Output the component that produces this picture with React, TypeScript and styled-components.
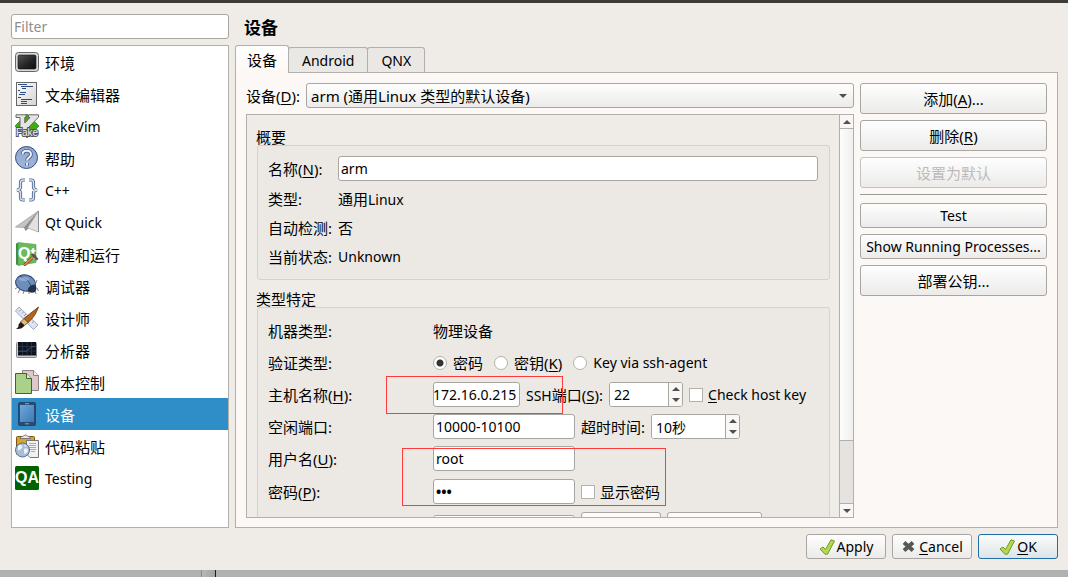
import React, { useState } from 'react';
import styled, { createGlobalStyle, css } from 'styled-components';

const GlobalStyle = createGlobalStyle`
  *, *::before, *::after { box-sizing: border-box; }
  body { margin: 0; background: #efebe7; }
  body, input, button, select {
    font-family: "Noto Sans", "Noto Sans CJK SC", sans-serif;
    font-size: 15px;
    color: #000;
  }
`;

/* ---------- shell ---------- */

const Dialog = styled.div`
  height: 100vh;
  display: flex;
  flex-direction: column;
  background: #efebe7;
  border-top: 3px solid #3c3b37;
`;

const Body = styled.div`
  flex: 1;
  min-height: 0;
  display: flex;
  gap: 6px;
  padding: 11px 10px 0 11px;
`;

const Sidebar = styled.aside`
  flex: none;
  width: 218px;
  display: flex;
  flex-direction: column;
  gap: 6px;
`;

const Main = styled.main`
  flex: 1;
  min-width: 0;
  display: flex;
  flex-direction: column;
`;

const Footer = styled.footer`
  display: flex;
  justify-content: flex-end;
  gap: 6px;
  padding: 6px 10px 11px;
`;

const Desktop = styled.div`
  flex: none;
  display: flex;
  height: 7px;
  background: #b1b1b1;
`;

const DesktopSeam = styled.div`
  width: 15px;
  margin-left: 201px;
  border-left: 1px solid #8a8a8a;
  border-right: 1px solid #1a1a1a;
  background: linear-gradient(90deg, #b8b8b6, #a3a3a1);
`;

/* ---------- text ---------- */

const Latin = styled.span`
  font-size: 14px;
`;

const Mnemonic = styled.u`
  text-underline-offset: 2px;
  text-decoration-thickness: 1px;
`;

const Hot = ({ k }: { k: string }) => (
  <span>
    (<Mnemonic>{k}</Mnemonic>)
  </span>
);

/* ---------- controls ---------- */

const field = css`
  height: 25px;
  border: 1px solid #a9a6a2;
  border-radius: 3px;
  background: #fff;
  outline: none;
`;

const TextField = styled.input<{ $w?: number; $flush?: boolean }>`
  ${field}
  min-width: 0;
  width: ${p => (p.$w ? `${p.$w}px` : '100%')};
  padding: ${p => (p.$flush ? '0 3px 0 0' : '0 3px 0 2px')};
  font-size: 14px;
  &[type='password'] { font-weight: 700; }
  &::placeholder { color: #8e8e8e; opacity: 1; }
`;

const Button = styled.button<{ $tall?: boolean; $primary?: boolean; $w?: number }>`
  display: flex;
  align-items: center;
  justify-content: center;
  flex: none;
  width: ${p => (p.$w ? `${p.$w}px` : '100%')};
  height: ${p => (p.$tall ? 31 : 25)}px;
  padding: 0;
  white-space: nowrap;
  font-size: ${p => (p.$tall ? 15 : 14)}px;
  border: 1px solid ${p => (p.$primary ? '#1f6ea7' : '#a9a6a2')};
  border-radius: 3px;
  background: ${p =>
    p.$primary
      ? 'linear-gradient(#fbfcfc, #dde4e8)'
      : 'linear-gradient(#fefefe, #ecebea)'};
  &:disabled { color: #bdbbb9; border-color: #c4c1be; }
`;

const SelectWrap = styled.div`
  position: relative;
  flex: 1;
  min-width: 0;
  display: flex;
`;

const Select = styled.select`
  appearance: none;
  width: 100%;
  height: 25px;
  padding: 0 24px 0 4px;
  border: 1px solid #a9a6a2;
  border-radius: 3px;
  background: linear-gradient(#fefefe, #ecebea);
  font-size: 15px;
  outline: none;
`;

const SelectArrow = styled.svg`
  position: absolute;
  right: 7px;
  top: 11px;
  pointer-events: none;
`;

const Arrow = ({ up }: { up?: boolean }) => (
  <svg width="8" height="4" viewBox="0 0 8 4">
    <path d={up ? 'M0 4L4 0L8 4Z' : 'M0 0L4 4L8 0Z'} fill="#50504e" />
  </svg>
);

const SpinFrame = styled.div<{ $w: number }>`
  ${field}
  display: flex;
  overflow: hidden;
  width: ${p => p.$w}px;
`;

const SpinInput = styled.input`
  flex: 1;
  min-width: 0;
  padding: 0 0 0 4px;
  border: 0;
  outline: none;
  font-size: 14px;
`;

const SpinButtons = styled.div`
  display: flex;
  flex-direction: column;
  width: 14px;
  border-left: 1px solid #a9a6a2;
`;

const SpinButton = styled.button`
  flex: 1;
  display: flex;
  align-items: center;
  justify-content: center;
  padding: 0;
  border: 0;
  background: #f8f7f6;
`;

const Spin = ({ id, value, w }: { id: string; value: string; w: number }) => (
  <SpinFrame $w={w}>
    <SpinInput id={id} defaultValue={value} />
    <SpinButtons>
      <SpinButton aria-label="+"><Arrow up /></SpinButton>
      <SpinButton aria-label="-"><Arrow /></SpinButton>
    </SpinButtons>
  </SpinFrame>
);

const Check = styled.input`
  appearance: none;
  flex: none;
  width: 14px;
  height: 14px;
  margin: 0 5px 0 0;
  border: 1px solid #b4b1ad;
  background: #fff;
`;

const Radio = styled(Check)`
  border-radius: 50%;
  margin-right: 6px;
  &:checked { background: radial-gradient(circle, #333 0 3px, #fff 4px); }
`;

const Choice = styled.label`
  display: flex;
  align-items: center;
  white-space: nowrap;
`;

/* ---------- category list ---------- */

const List = styled.ul`
  flex: 1;
  min-height: 0;
  overflow: hidden;
  margin: 0;
  padding: 0;
  list-style: none;
  border: 1px solid #b2afac;
  background: #fff;
`;

const Item = styled.li<{ $active?: boolean; $latin?: boolean }>`
  display: flex;
  align-items: center;
  gap: 6px;
  height: 32px;
  padding-left: 3px;
  font-size: ${p => (p.$latin ? 14 : 15)}px;
  color: ${p => (p.$active ? '#fff' : '#000')};
  background: ${p => (p.$active ? '#2f8dc7' : 'transparent')};
`;

/* ---------- tabs and panel ---------- */

const Title = styled.h1`
  margin: 0;
  padding: 2px 0 0 9px;
  height: 31px;
  font-size: 17px;
  line-height: 24px;
  font-weight: 700;
`;

const Tabs = styled.div`
  display: flex;
  align-items: flex-end;
  height: 27px;
`;

const Tab = styled.button<{ $active?: boolean }>`
  position: relative;
  height: ${p => (p.$active ? 28 : 25)}px;
  margin: 0 0 ${p => (p.$active ? -1 : 0)}px ${p => (p.$active ? 0 : -1)}px;
  padding: 0 ${p => (p.$active ? 11 : 13)}px;
  font-size: ${p => (p.$active ? 15 : 14)}px;
  border: 1px solid #b2afac;
  border-bottom: 0;
  border-radius: 3px 3px 0 0;
  background: ${p => (p.$active ? 'linear-gradient(#fff, #fcf8f5)' : '#eae8e4')};
`;

const Panel = styled.section`
  flex: 1;
  min-height: 0;
  display: flex;
  gap: 6px;
  padding: 10px 10px 9px;
  border: 1px solid #b2afac;
  background: #fcf8f5;
`;

const Left = styled.div`
  flex: 1;
  min-width: 0;
  display: flex;
  flex-direction: column;
  gap: 6px;
`;

const Actions = styled.div`
  flex: none;
  width: 187px;
  display: flex;
  flex-direction: column;
  gap: 6px;
`;

const Rule = styled.hr`
  width: 100%;
  margin: 0 0 2px;
  border: 0;
  border-top: 1px solid #9c9a98;
`;

const DeviceRow = styled.div`
  display: flex;
  align-items: center;
  gap: 6px;
`;

const ScrollFrame = styled.div`
  flex: 1;
  min-height: 0;
  display: flex;
  border: 1px solid #b2afac;
  background: #efebe7;
`;

const ScrollContent = styled.div`
  flex: 1;
  min-width: 0;
  overflow-y: auto;
  scrollbar-width: none;
  padding: 10px 9px 0 10px;
`;

const ScrollBar = styled.div`
  flex: none;
  width: 14px;
  display: flex;
  flex-direction: column;
  border-left: 1px solid #b2afac;
  background: #e4e3e0;
`;

const ScrollStep = styled.button`
  height: 13px;
  display: flex;
  align-items: center;
  justify-content: center;
  padding: 0;
  border: 0;
  background: #f8f7f6;
`;

const Thumb = styled.div`
  flex: 312;
  border: solid #b2afac;
  border-width: 1px 0;
  background: linear-gradient(90deg, #fdfdfd, #f0efee);
`;

const Track = styled.div`
  flex: 62;
  border-bottom: 1px solid #b2afac;
`;

const Group = styled.section`
  position: relative;
  & + & { margin-top: 7px; }
`;

const GroupTitle = styled.h2`
  margin: 0 0 0 -1px;
  height: 20px;
  font-size: 15px;
  line-height: 24px;
  font-weight: 400;
`;

const GroupBox = styled.div<{ $gap: number }>`
  display: flex;
  flex-direction: column;
  gap: ${p => p.$gap}px;
  padding: 10px 11px 11px 10px;
  border: 1px solid #d5d2ce;
  border-radius: 3px;
  background: #ece9e5;
`;

const Row = styled.div<{ $h?: number; $label: number }>`
  display: grid;
  grid-template-columns: ${p => p.$label}px minmax(0, 1fr);
  align-items: center;
  height: ${p => p.$h ?? 25}px;
`;

const Cell = styled.div<{ $gap?: number }>`
  display: flex;
  align-items: center;
  gap: ${p => p.$gap ?? 6}px;
  white-space: nowrap;
`;

const Marker = styled.div<{ $x: number; $y: number; $w: number; $h: number }>`
  position: absolute;
  left: ${p => p.$x}px;
  top: ${p => p.$y}px;
  width: ${p => p.$w}px;
  height: ${p => p.$h}px;
  border: 1px solid #ff3a3a;
  pointer-events: none;
`;

/* ---------- icons ---------- */

const Icon = ({ children }: { children: React.ReactNode }) => (
  <svg width="24" height="24" viewBox="0 0 24 24" aria-hidden="true">{children}</svg>
);

const MonitorIcon = () => (
  <Icon>
    <defs><linearGradient id="scr" x1="0" y1="0" x2="1" y2="1"><stop offset="0" stopColor="#555" /><stop offset=".6" stopColor="#222" /><stop offset="1" stopColor="#111" /></linearGradient></defs>
    <rect x=".5" y="2.5" width="23" height="19" rx="3" fill="#d9d9d9" stroke="#666" />
    <rect x="3" y="5" width="18" height="14" rx="1.5" fill="url(#scr)" stroke="#111" strokeWidth=".6" />
  </Icon>
);

const TextIcon = () => (
  <Icon>
    <defs><linearGradient id="pg" x1="0" y1="0" x2="1" y2="1"><stop offset="0" stopColor="#fff" /><stop offset="1" stopColor="#d3d3d3" /></linearGradient></defs>
    <rect x="1.5" y=".5" width="20" height="23" fill="url(#pg)" stroke="#666" />
    <path d="M3 2.5h9M6 4.5h12M7 6.5h4M3 8.5h2M5 10.5h6M4 12.5h4M7 12.5h3M3 15.500h3M6 17.500h11M6 19.500h6M6 21.500h6" stroke="#2d4b7c" />
  </Icon>
);

const VimIcon = () => (
  <Icon>
    <path d="M12 0L24 12L12 24L0 12Z" fill="#3fae14" stroke="#1d6b0c" strokeWidth=".6" />
    <path d="M1 .8H11V3.500H9.800V9L15 3.500H13.500V.8H23.500V3.200L10 17H5V3.500H1Z" fill="#e4e4e4" stroke="#666" />
    <text x="12" y="21.500" textAnchor="middle" fontFamily="Liberation Sans, sans-serif" fontSize="10" fill="#f2f2f2" stroke="#555" strokeWidth="2" paintOrder="stroke">Fake</text>
  </Icon>
);

const HelpIcon = () => (
  <Icon>
    <defs><linearGradient id="hp" x1="0" y1="0" x2="0" y2="1"><stop offset="0" stopColor="#8fa6cf" /><stop offset="1" stopColor="#9fb6dc" /></linearGradient></defs>
    <circle cx="11.500" cy="11.500" r="11" fill="url(#hp)" stroke="#35507f" />
    <path d="M7.500 8.500C7.500 3.500 16 3.500 16 8.500C16 11.500 12 11.500 12 14.500M12 17v2.500" fill="none" stroke="#3e5680" strokeWidth="3.600" />
    <path d="M7.500 8.500C7.500 3.500 16 3.500 16 8.500C16 11.500 12 11.500 12 14.500M12 17v2.500" fill="none" stroke="#eef2f9" strokeWidth="2" />
  </Icon>
);

const BraceIcon = () => {
  const d = 'M10 2H8Q5.500 2 5.500 4.500V9Q5.500 11.500 2 12Q5.500 12.500 5.500 15V19.500Q5.500 22 8 22H10M14 2H16Q18.500 2 18.500 4.500V9Q18.500 11.500 22 12Q18.500 12.500 18.500 15V19.500Q18.500 22 16 22H14';
  return (
    <Icon>
      <path d={d} fill="none" stroke="#52688a" strokeWidth="3.200" />
      <path d={d} fill="none" stroke="#d5dff0" strokeWidth="1.400" />
    </Icon>
  );
};

const PlaneIcon = () => (
  <Icon>
    <path d="M.5 17L23.500 1L10 17.500Z" fill="#c4c4c4" stroke="#9a9a9a" strokeWidth=".7" />
    <path d="M23.500 1L9 17.500L10.500 21L13.500 18.500Z" fill="#8c8c8c" />
    <path d="M23.500 1L12.500 18L23.500 22Z" fill="#e2e2e2" stroke="#a2a2a2" strokeWidth=".7" />
    <path d="M23.500 1V22" stroke="#8a8a8a" />
  </Icon>
);

const BuildIcon = () => (
  <Icon>
    <path d="M1 1.500L4 .5V23.500L1 22.500Z" fill="#3e8c45" />
    <path d="M3 .5L21 2.500V20.500L3 23.500Z" fill="#6cba5a" stroke="#4b9c48" strokeWidth=".6" />
    <text x="12" y="17" textAnchor="middle" fontFamily="Liberation Sans Narrow, Liberation Sans, sans-serif" fontWeight="700" fontSize="16" fill="#fff">Qt</text>
    <path d="M10 22.500L19 14" stroke="#7a4212" strokeWidth="3" strokeLinecap="round" />
    <path d="M10 22.500L19 14" stroke="#e09a4d" strokeWidth="1.600" strokeLinecap="round" />
    <path d="M15.500 12.500Q18 10.500 20 13L23.500 17L21.500 18.500L18 15Z" fill="#555" />
  </Icon>
);

const BugIcon = () => (
  <Icon>
    <path d="M3 13L0 15M5 15L3 19M9 17L8 20M21 9L22 6M22 14L23.500 17M14 18L14 20M20 17L21 20" fill="none" stroke="#777a80" strokeWidth=".9" />
    <ellipse cx="10.500" cy="9" rx="10" ry="8" transform="rotate(14 10.500 9)" fill="#6d8dbd" stroke="#2d456f" />
    <path d="M5 2.500Q13 4 16 12" fill="none" stroke="#2d456f" strokeWidth=".9" />
    <ellipse cx="9" cy="5" rx="5" ry="2" fill="#a9bfdf" opacity=".6" />
    <path d="M12.500 17Q13 11 20 10.500Q23 14 20 18Q16 20 12.500 17Z" fill="#22324c" />
  </Icon>
);

const DesignIcon = () => (
  <Icon>
    <path d="M4 1L23 19L18.500 23.500L.5 5Z" fill="#dfe5ee" stroke="#8795ab" strokeWidth=".8" />
    <path d="M6 3.500L4 5.500M8.500 6L7 7.500M11 8L9 10M13.500 10.500L12 12M16 13L14 15M18.500 15.500L17 17" stroke="#77859b" strokeWidth=".8" />
    <path d="M23.500 1L9 12.500L13 16.500Q20 11 23.500 1Z" fill="#b5651d" stroke="#5a2d0a" strokeWidth=".8" />
    <path d="M9 12.500L13 16.500L9.500 19.500L5.500 16Z" fill="#e0ba7a" stroke="#5a2d0a" strokeWidth=".7" />
    <path d="M5.500 16L9.500 19.500Q7 23.500 1 23Q4 21 3.500 18.500Z" fill="#221a14" />
  </Icon>
);

const AnalyzerIcon = () => (
  <Icon>
    <rect x="1.500" y="4.500" width="20" height="15" rx="1" fill="#ccc" stroke="#888" />
    <rect x="3" y="4" width="18" height="13.500" fill="#0e141d" />
    <path d="M7.500 4V17M12 4V17M16.500 4V17M3 8.500H21M3 13H21" stroke="#2c3b50" strokeWidth=".7" />
    <path d="M3 14L7 13L11 13.500L15 10L20 8" fill="none" stroke="#3f5878" strokeWidth=".8" />
  </Icon>
);

const VersionIcon = () => (
  <Icon>
    <path d="M7.500.5H18.500L23.500 5.500V20.500H7.500Z" fill="#dcc9cb" stroke="#8f8385" />
    <path d="M18.500.5V5.500H23.500" fill="#f4eded" stroke="#8f8385" />
    <path d="M.5 3.500H11.500L16.500 8.500V23.500H.5Z" fill="#abd08a" stroke="#41632f" />
    <path d="M11.500 3.500V8.500H16.500" fill="#dcefc6" stroke="#41632f" />
  </Icon>
);

const DeviceIcon = () => (
  <Icon>
    <defs><linearGradient id="dv" x1="0" y1="0" x2="1" y2="1"><stop offset="0" stopColor="#6ea8da" /><stop offset="1" stopColor="#3a7ab8" /></linearGradient></defs>
    <rect x="3.500" y=".5" width="17" height="23" rx="1.500" fill="#2c4a70" stroke="#23466e" />
    <rect x="5" y="3" width="14" height="17" fill="url(#dv)" />
    <path d="M10 1.700H14M10 21.800H14" stroke="#87a5c7" />
  </Icon>
);

const PasteIcon = () => (
  <Icon>
    <rect x="1.500" y="2.500" width="18" height="18" rx="1" fill="#d8a52d" stroke="#77560e" />
    <path d="M5 4.500Q5 2.500 8.500 2Q10.500-.5 12.500 2Q15.500 2.500 15.500 4.500Z" fill="#e6e6e6" stroke="#666" strokeWidth=".8" />
    <path d="M11.500 6.500H23.500V23.500H15L11.500 20Z" fill="#f1f1f1" stroke="#777" />
    <path d="M14 9.500H21M14 11.500H21M14 13.500H21M15 15.500H21M16 17.500H20" stroke="#999" strokeWidth=".8" />
    <circle cx="7.500" cy="16" r="7" fill="#a9bdd8" stroke="#4b6488" strokeWidth=".9" />
    <path d="M3 11.500Q7 10 7.500 13Q5.500 17 3 16ZM9 15Q13 13 13 17Q11 21 9 19ZM9 10.500L12 12L10 13Z" fill="#eef3f9" />
  </Icon>
);

const QaIcon = () => (
  <Icon>
    <rect width="24" height="24" rx="1.500" fill="#006100" />
    <text x="12" y="17" textAnchor="middle" fontFamily="Liberation Sans Narrow, Liberation Sans, sans-serif" fontWeight="700" fontSize="16" fill="#fff">QA</text>
  </Icon>
);

const CheckIcon = () => (
  <svg width="18" height="16" viewBox="0 0 18 16" aria-hidden="true">
    <path d="M1 10L4 8L6.500 10.500L12 .8L15.500 2L8.500 15.200H6Z" fill="#b5d84f" stroke="#6c9a2a" strokeLinejoin="round" />
  </svg>
);

const CrossIcon = () => (
  <svg width="18" height="16" viewBox="0 0 18 16" aria-hidden="true">
    <path d="M3 3.500L12 11.500M12 3.500L3 11.500" stroke="#555753" strokeWidth="4" />
  </svg>
);

/* ---------- data ---------- */

const categories: { label: string; icon: React.ReactNode; latin?: boolean }[] = [
  { label: '环境', icon: <MonitorIcon /> },
  { label: '文本编辑器', icon: <TextIcon /> },
  { label: 'FakeVim', icon: <VimIcon />, latin: true },
  { label: '帮助', icon: <HelpIcon /> },
  { label: 'C++', icon: <BraceIcon />, latin: true },
  { label: 'Qt Quick', icon: <PlaneIcon />, latin: true },
  { label: '构建和运行', icon: <BuildIcon /> },
  { label: '调试器', icon: <BugIcon /> },
  { label: '设计师', icon: <DesignIcon /> },
  { label: '分析器', icon: <AnalyzerIcon /> },
  { label: '版本控制', icon: <VersionIcon /> },
  { label: '设备', icon: <DeviceIcon /> },
  { label: '代码粘贴', icon: <PasteIcon /> },
  { label: 'Testing', icon: <QaIcon />, latin: true },
];

// Keeps the end of a long address in view, as after typing it.
const showEnd = (el: HTMLInputElement | null) => {
  if (el) el.scrollLeft = el.scrollWidth;
};

export default function App() {
  const [active, setActive] = useState('设备');
  return (
    <Dialog>
      <GlobalStyle />
      <Body>
        <Sidebar>
          <TextField placeholder="Filter" aria-label="Filter" />
          <List>
            {categories.map(c => (
              <Item key={c.label} $active={c.label === active} $latin={c.latin} onClick={() => setActive(c.label)}>
                {c.icon}
                {c.label}
              </Item>
            ))}
          </List>
        </Sidebar>
        <Main>
          <Title>设备</Title>
          <Tabs role="tablist">
            <Tab role="tab" aria-selected $active>设备</Tab>
            <Tab role="tab">Android</Tab>
            <Tab role="tab">QNX</Tab>
          </Tabs>
          <Panel>
            <Left>
              <DeviceRow>
                <label htmlFor="device">设备<Hot k="D" />:</label>
                <SelectWrap>
                  <Select id="device">
                    <option>arm (通用Linux 类型的默认设备)</option>
                  </Select>
                  <SelectArrow width="8" height="4" viewBox="0 0 8 4"><path d="M0 0L4 4L8 0Z" fill="#50504e" /></SelectArrow>
                </SelectWrap>
              </DeviceRow>
              <ScrollFrame>
                <ScrollContent>
                  <Group>
                    <GroupTitle>概要</GroupTitle>
                    <GroupBox $gap={6}>
                      <Row $label={70}>
                        <label htmlFor="name">名称<Hot k="N" />:</label>
                        <TextField id="name" defaultValue="arm" />
                      </Row>
                      <Row $label={70} $h={23}><span>类型:</span><span>通用<Latin>Linux</Latin></span></Row>
                      <Row $label={70} $h={23}><span>自动检测:</span><span>否</span></Row>
                      <Row $label={70} $h={23}><span>当前状态:</span><Latin>Unknown</Latin></Row>
                    </GroupBox>
                  </Group>
                  <Group>
                    <GroupTitle>类型特定</GroupTitle>
                    <GroupBox $gap={7}>
                      <Row $label={165}><span>机器类型:</span><span>物理设备</span></Row>
                      <Row $label={165}>
                        <span>验证类型:</span>
                        <Cell $gap={11}>
                          <Choice><Radio type="radio" name="auth" defaultChecked />密码</Choice>
                          <Choice><Radio type="radio" name="auth" /><span>密钥<Hot k="K" /></span></Choice>
                          <Choice><Radio type="radio" name="auth" /><Latin>Key via ssh-agent</Latin></Choice>
                        </Cell>
                      </Row>
                      <Row $label={165}>
                        <label htmlFor="host">主机名称<Hot k="H" />:</label>
                        <Cell>
                          <TextField id="host" ref={showEnd} $w={87} $flush defaultValue="172.16.0.215" />
                          <label htmlFor="ssh"><Latin>SSH</Latin>端口<Hot k="S" />:</label>
                          <Spin id="ssh" value="22" w={74} />
                          <Choice><Check type="checkbox" /><Latin><Mnemonic>C</Mnemonic>heck host key</Latin></Choice>
                        </Cell>
                      </Row>
                      <Row $label={165}>
                        <label htmlFor="ports">空闲端口:</label>
                        <Cell>
                          <TextField id="ports" $w={142} defaultValue="10000-10100" />
                          <label htmlFor="timeout">超时时间:</label>
                          <Spin id="timeout" value="10秒" w={89} />
                        </Cell>
                      </Row>
                      <Row $label={165}>
                        <label htmlFor="user">用户名<Hot k="U" />:</label>
                        <TextField id="user" $w={142} defaultValue="root" />
                      </Row>
                      <Row $label={165} $h={27}>
                        <label htmlFor="pass">密码<Hot k="P" />:</label>
                        <Cell>
                          <TextField id="pass" type="password" $w={142} defaultValue="arm" />
                          <Choice><Check type="checkbox" />显示密码</Choice>
                        </Cell>
                      </Row>
                      <Row $label={165} $h={31}>
                        <span />
                        <Cell>
                          <TextField $w={142} aria-label="key" />
                          <Button $tall $w={80} />
                          <Button $tall $w={95} />
                        </Cell>
                      </Row>
                    </GroupBox>
                    <Marker $x={129} $y={89} $w={177} $h={38} />
                    <Marker $x={145} $y={161} $w={264} $h={58} />
                  </Group>
                </ScrollContent>
                <ScrollBar>
                  <ScrollStep aria-label="up"><Arrow up /></ScrollStep>
                  <Thumb />
                  <Track />
                  <ScrollStep aria-label="down"><Arrow /></ScrollStep>
                </ScrollBar>
              </ScrollFrame>
            </Left>
            <Actions>
              <Button $tall><span>添加<Hot k="A" />...</span></Button>
              <Button $tall><span>删除<Hot k="R" /></span></Button>
              <Button $tall disabled>设置为默认</Button>
              <Rule />
              <Button>Test</Button>
              <Button>Show Running Processes...</Button>
              <Button $tall>部署公钥...</Button>
            </Actions>
          </Panel>
        </Main>
      </Body>
      <Footer>
        <Button $w={80}><CheckIcon />Apply</Button>
        <Button $w={80}><CrossIcon /><span><Mnemonic>C</Mnemonic>ancel</span></Button>
        <Button $w={80} $primary><CheckIcon /><span><Mnemonic>O</Mnemonic>K</span></Button>
      </Footer>
      <Desktop><DesktopSeam /></Desktop>
    </Dialog>
  );
}
